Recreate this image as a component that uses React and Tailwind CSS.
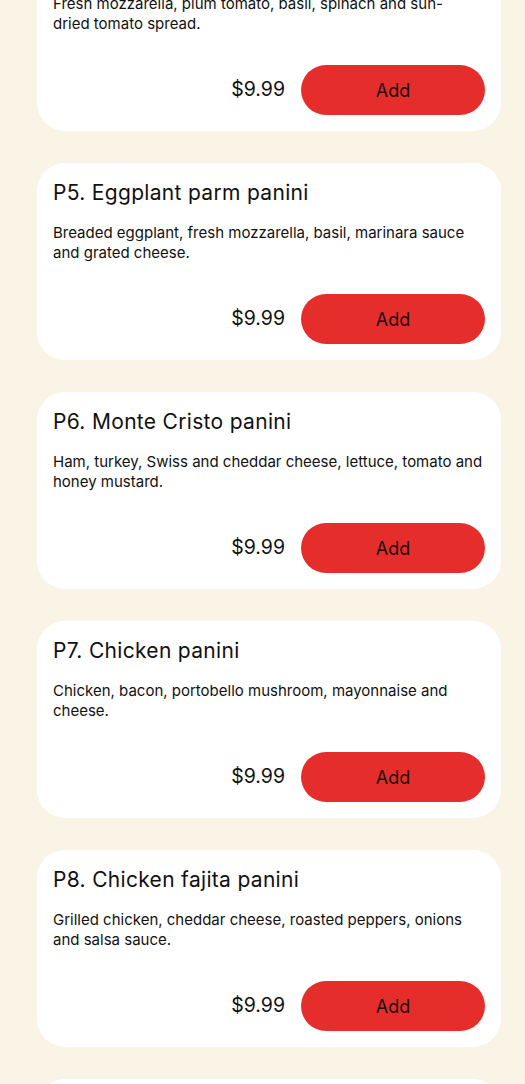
import React from "react";

const items = [
  { name: "P4. Caprese panini", desc: <>Fresh mozzarella, plum tomato, basil, spinach and sun-<br />dried tomato spread.</> },
  { name: "P5. Eggplant parm panini", desc: "Breaded eggplant, fresh mozzarella, basil, marinara sauce and grated cheese." },
  { name: "P6. Monte Cristo panini", desc: "Ham, turkey, Swiss and cheddar cheese, lettuce, tomato and honey mustard." },
  { name: "P7. Chicken panini", desc: "Chicken, bacon, portobello mushroom, mayonnaise and cheese." },
  { name: "P8. Chicken fajita panini", desc: "Grilled chicken, cheddar cheese, roasted peppers, onions and salsa sauce." },
  { name: "P9. Buffalo chicken panini", desc: "Buffalo chicken, lettuce, tomato and blue cheese dressing." },
];

export default function App() {
  return (
    <div className="min-h-screen bg-[#faf4e6] overflow-hidden" style={{ fontFamily: "Inter, 'Noto Sans', sans-serif" }}>
      <div className="flex flex-col gap-8 pl-[37px] pr-[24px] -mt-[66px] pb-10">
        {items.map((it) => (
          <div key={it.name} className="bg-white rounded-[28px] p-4 flex flex-col">
            <h3 className="text-[21px] leading-[28px] tracking-[0.015em] text-[#111] font-normal">{it.name}</h3>
            <p className="mt-4 text-[15px] leading-[20px] text-[#111]">{it.desc}</p>
            <div className="mt-[31px] flex items-center justify-end gap-4">
              <span className="text-[19.5px] text-[#111]">$9.99</span>
              <button className="w-[184px] h-[50px] rounded-full bg-[#e52e2b] text-[18px] text-[#1a0a0a]">Add</button>
            </div>
          </div>
        ))}
      </div>
    </div>
  );
}
